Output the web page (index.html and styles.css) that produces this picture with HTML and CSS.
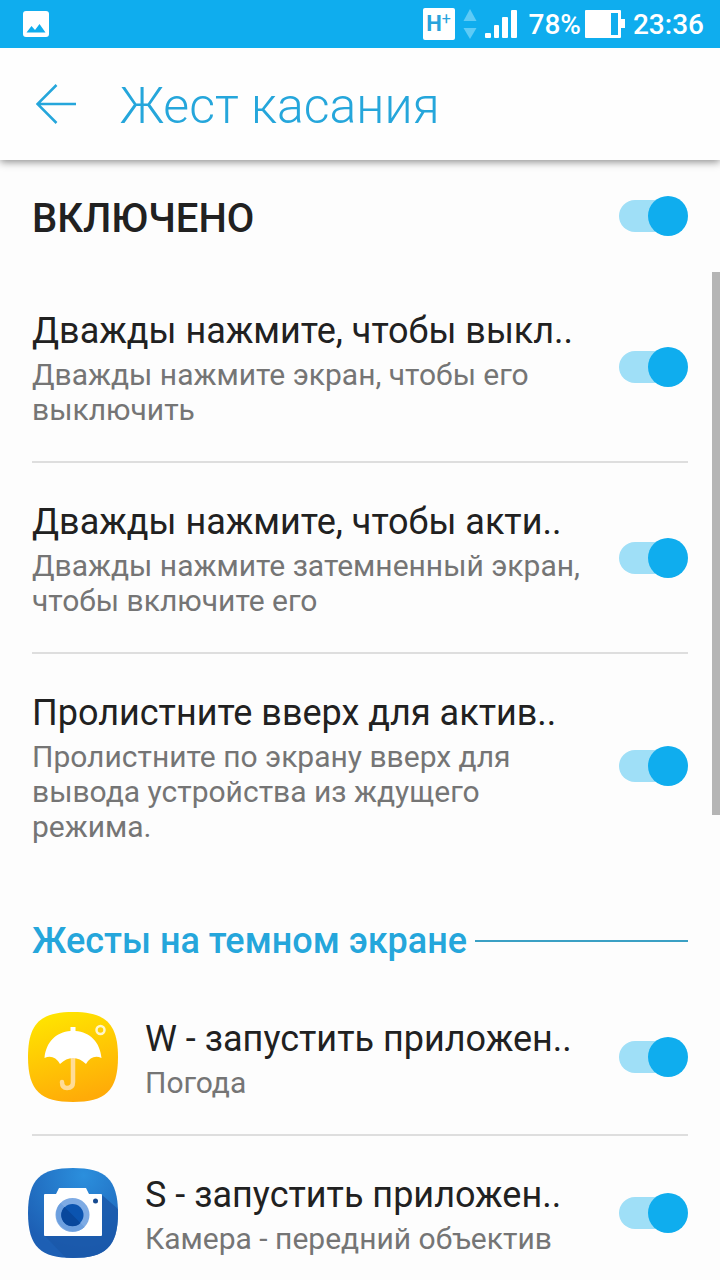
FILE: index.html
```
<!DOCTYPE html>
<html lang="ru">
<head>
    <meta charset="UTF-8">
    <meta name="viewport" content="width=device-width, initial-scale=1.0">
    <title>Жест касания</title>
    <link rel="stylesheet" href="styles.css">
</head>
<body>
    <div class="screen">
        <div class="status-bar">
            <svg class="status-image" width="26" height="26" viewBox="0 0 26 26">
                <rect width="26" height="26" rx="3" fill="#fff"/>
                <path d="M3.500 21.500L8.500 15L12 19L16.500 13L22.500 21.500Z" fill="#0fadee"/>
            </svg>
            <div class="status-right">
                <div class="network">H<sup>+</sup></div>
                <svg width="14" height="32" viewBox="0 0 14 32" fill="#5ecbf6">
                    <path d="M7 1L13.500 13H0.500Z"/>
                    <path d="M7 31L13.500 20H0.500Z"/>
                </svg>
                <svg class="signal" width="32" height="30" viewBox="0 0 32 30" fill="#fff">
                    <rect x="0" y="24" width="6" height="5" rx="1"/>
                    <rect x="9" y="16" width="5" height="13" rx="1"/>
                    <rect x="17" y="8" width="6" height="21" rx="1"/>
                    <rect x="26" y="1" width="6" height="28" rx="1"/>
                </svg>
                <span class="percent">78%</span>
                <svg class="battery" width="40" height="28" viewBox="0 0 40 28">
                    <path d="M1 0H35Q36 0 36 1V9H40V18H36V27Q36 28 35 28H1Q0 28 0 27V1Q0 0 1 0Z" fill="#fff"/>
                    <rect x="26" y="3" width="7" height="22" fill="#0fadee"/>
                </svg>
                <span>23:36</span>
            </div>
        </div>

        <header class="header">
            <button class="back-btn" type="button" aria-label="Назад">
                <svg width="42" height="40" viewBox="0 0 42 40" fill="none" stroke="#25a6db" stroke-width="2.500">
                    <path d="M20.500 1L1.500 20L20.500 39M1.500 20H40"/>
                </svg>
            </button>
            <h1>Жест касания</h1>
        </header>

        <main class="settings">
            <div class="scrollbar"></div>

            <div class="row master">
                <label class="row-title" for="all">ВКЛЮЧЕНО</label>
                <input class="switch" type="checkbox" id="all" checked>
            </div>

            <div class="row line">
                <label class="row-text" for="tapOff">
                    <span class="row-title">Дважды нажмите, чтобы выкл..</span>
                    <span class="row-desc">Дважды нажмите экран, чтобы его выключить</span>
                </label>
                <input class="switch" type="checkbox" id="tapOff" checked>
            </div>
            <div class="row line">
                <label class="row-text" for="tapOn">
                    <span class="row-title">Дважды нажмите, чтобы акти..</span>
                    <span class="row-desc">Дважды нажмите затемненный экран, чтобы включите его</span>
                </label>
                <input class="switch" type="checkbox" id="tapOn" checked>
            </div>
            <div class="row">
                <label class="row-text" for="swipeUp">
                    <span class="row-title">Пролистните вверх для актив..</span>
                    <span class="row-desc">Пролистните по экрану вверх для вывода устройства из ждущего режима.</span>
                </label>
                <input class="switch" type="checkbox" id="swipeUp" checked>
            </div>

            <h2 class="section">Жесты на темном экране</h2>

            <div class="row line">
                <svg class="app-icon" width="90" height="90" viewBox="0 0 90 90">
                    <defs>
                        <linearGradient id="sun" x1="0.200" y1="0" x2="0.500" y2="1">
                            <stop offset="0" stop-color="#ffe600"/>
                            <stop offset="1" stop-color="#ffab08"/>
                        </linearGradient>
                    </defs>
                    <path d="M45 0C77 0 90 11 90 45S77 90 45 90S0 79 0 45S13 0 45 0Z" fill="url(#sun)"/>
                    <path d="M45 44V70Q45 76 39 76Q34 76 34 70" fill="none" stroke="#ffdc96" stroke-width="4.500" stroke-linecap="round"/>
                    <path d="M42.500 15H47.500V19C62 20 72 30 73.500 46Q64 42 58 52Q52 46 45 46Q38 46 32 52Q26 42 16.500 46C18 30 28 20 42.500 19Z" fill="#fff"/>
                    <circle cx="72.500" cy="18" r="4" fill="none" stroke="#fff6cc" stroke-width="2.500"/>
                </svg>
                <label class="row-text" for="gestureW">
                    <span class="row-title">W - запустить приложен..</span>
                    <span class="row-desc">Погода</span>
                </label>
                <input class="switch" type="checkbox" id="gestureW" checked>
            </div>
            <div class="row">
                <svg class="app-icon" width="90" height="90" viewBox="0 0 90 90">
                    <defs>
                        <radialGradient id="sky" cx="0.620" cy="0.080" r="0.850">
                            <stop offset="0" stop-color="#2b8fdd"/>
                            <stop offset="1" stop-color="#1d5fb4"/>
                        </radialGradient>
                        <clipPath id="tile">
                            <path d="M45 0C77 0 90 11 90 45S77 90 45 90S0 79 0 45S13 0 45 0Z"/>
                        </clipPath>
                    </defs>
                    <g clip-path="url(#tile)">
                        <rect width="90" height="90" fill="url(#sky)"/>
                        <path d="M74 27L90 41V90H38L17 68Z" fill="#1a58a9" opacity="0.800"/>
                    </g>
                    <path d="M17 26H28L31 20H58L61 26H73Q74 26 74 27V67Q74 68 73 68H17Q16 68 16 67V27Q16 26 17 26Z" fill="#fff"/>
                    <circle cx="44.500" cy="47" r="17" fill="#7eabe4"/>
                    <path d="M44.500 47L32.500 35A17 17 0 0 0 56.500 59Z" fill="#6c9fdf"/>
                    <circle cx="44.500" cy="47" r="11" fill="#0b54b0"/>
                    <path d="M36.500 39A11 11 0 0 0 52.500 55Z" fill="#08479c"/>
                    <circle cx="67.500" cy="33" r="2.500" fill="#164a90"/>
                </svg>
                <label class="row-text" for="gestureS">
                    <span class="row-title">S - запустить приложен..</span>
                    <span class="row-desc">Камера - передний объектив</span>
                </label>
                <input class="switch" type="checkbox" id="gestureS" checked>
            </div>
        </main>
    </div>
</body>
</html>
```
FILE: styles.css
```
* {
    margin: 0;
    padding: 0;
    box-sizing: border-box;
}

body {
    font-family: Roboto, 'Liberation Sans', sans-serif;
    background-color: #fdfdfd;
    color: #212121;
}

.screen {
    display: flex;
    flex-direction: column;
    height: 100vh;
    overflow: hidden;
}

.status-bar {
    display: flex;
    flex-shrink: 0;
    justify-content: space-between;
    align-items: center;
    height: 48px;
    padding: 0 16px 0 23px;
    background-color: #0fadee;
    color: white;
    font-size: 28px;
    font-weight: 500;
    z-index: 2;
}

.status-right {
    display: flex;
    align-items: center;
    gap: 8px;
}

.network {
    display: flex;
    justify-content: center;
    width: 32px;
    height: 32px;
    border-radius: 2px;
    background-color: white;
    color: #29a3dc;
    font-size: 22px;
    font-weight: 700;
    line-height: 32px;
}

.network sup {
    font-size: 16px;
    font-weight: 400;
    line-height: 22px;
}

.percent {
    margin: 0 -4px 0 4px;
}

.header {
    display: flex;
    flex-shrink: 0;
    align-items: center;
    gap: 42px;
    height: 112px;
    padding: 0 36px;
    background-color: #fefefe;
    box-shadow: 0 2px 8px rgba(0, 0, 0, 0.45);
    z-index: 1;
}

.back-btn {
    height: 40px;
    border: none;
    background: none;
    cursor: pointer;
}

h1 {
    padding-top: 4px;
    color: #25a6db;
    font-size: 50px;
    font-weight: 300;
}

.settings {
    flex: 1;
    position: relative;
    min-height: 0;
}

.scrollbar {
    position: absolute;
    top: 112px;
    right: 0;
    width: 8px;
    height: 543px;
    background-color: #b5b5b5;
}

.row {
    display: flex;
    align-items: center;
    margin: 0 32px;
}

.line {
    border-bottom: 2px solid #dedede;
}

.row-text {
    flex: 1;
    min-width: 0;
    padding: 38px 32px 34px 0;
}

.row-title {
    display: block;
    font-size: 36px;
    line-height: 42px;
    white-space: nowrap;
}

.row-desc {
    display: block;
    margin-top: 5px;
    color: #757575;
    font-size: 30px;
    line-height: 35px;
}

.master {
    justify-content: space-between;
    height: 112px;
}

.master .row-title {
    padding-top: 5px;
    font-size: 40px;
    font-weight: 500;
}

.app-icon {
    flex-shrink: 0;
    margin: 0 27px 0 -4px;
}

.section {
    display: flex;
    align-items: center;
    gap: 8px;
    height: 102px;
    margin: 0 32px;
    padding-top: 24px;
    color: #25a6db;
    font-size: 36px;
    font-weight: 500;
    line-height: 42px;
}

.section::after {
    content: "";
    flex: 1;
    height: 2px;
    background-color: #3ba0c4;
}

.switch {
    appearance: none;
    display: flex;
    align-items: center;
    flex-shrink: 0;
    width: 69px;
    height: 40px;
    cursor: pointer;
}

.switch::before {
    content: "";
    width: 60px;
    height: 32px;
    border-radius: 16px;
    background-color: #d5d5d5;
}

.switch::after {
    content: "";
    width: 40px;
    height: 40px;
    margin-left: -60px;
    border-radius: 50%;
    background-color: #f1f1f1;
}

.switch:checked::before {
    background-color: #9fdff7;
}

.switch:checked::after {
    margin-left: -31px;
    background-color: #0fadee;
}
```
